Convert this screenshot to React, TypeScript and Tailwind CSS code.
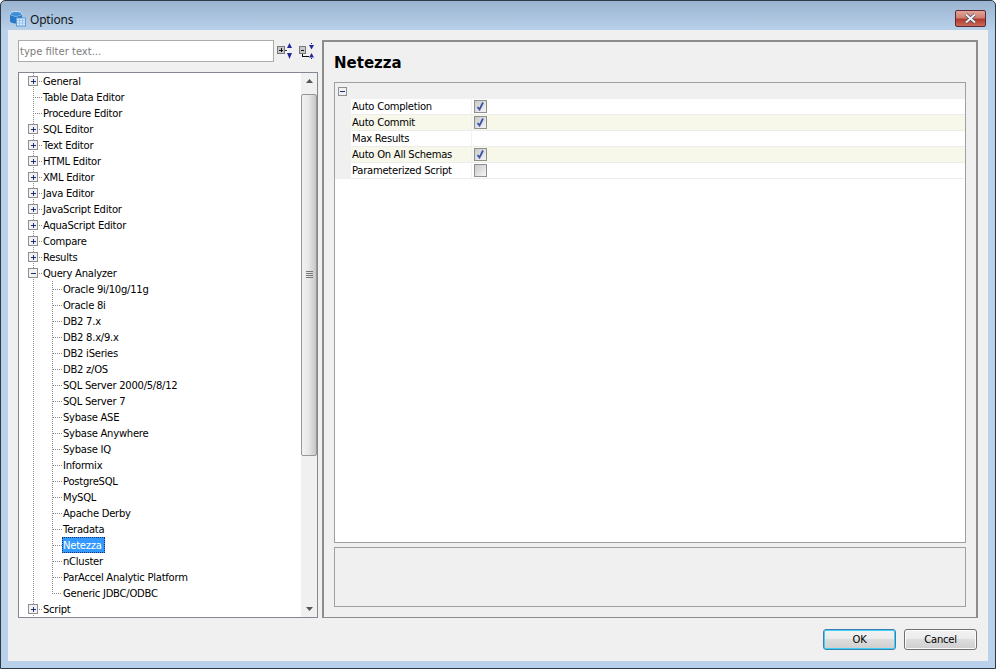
const treeItems = [
  { label: 'General', plus: true },
  { label: 'Table Data Editor' },
  { label: 'Procedure Editor' },
  { label: 'SQL Editor', plus: true },
  { label: 'Text Editor', plus: true },
  { label: 'HTML Editor', plus: true },
  { label: 'XML Editor', plus: true },
  { label: 'Java Editor', plus: true },
  { label: 'JavaScript Editor', plus: true },
  { label: 'AquaScript Editor', plus: true },
  { label: 'Compare', plus: true },
  { label: 'Results', plus: true },
  { label: 'Query Analyzer', minus: true },
  { label: 'Oracle 9i/10g/11g', child: true },
  { label: 'Oracle 8i', child: true },
  { label: 'DB2 7.x', child: true },
  { label: 'DB2 8.x/9.x', child: true },
  { label: 'DB2 iSeries', child: true },
  { label: 'DB2 z/OS', child: true },
  { label: 'SQL Server 2000/5/8/12', child: true },
  { label: 'SQL Server 7', child: true },
  { label: 'Sybase ASE', child: true },
  { label: 'Sybase Anywhere', child: true },
  { label: 'Sybase IQ', child: true },
  { label: 'Informix', child: true },
  { label: 'PostgreSQL', child: true },
  { label: 'MySQL', child: true },
  { label: 'Apache Derby', child: true },
  { label: 'Teradata', child: true },
  { label: 'Netezza', child: true, selected: true },
  { label: 'nCluster', child: true },
  { label: 'ParAccel Analytic Platform', child: true },
  { label: 'Generic JDBC/ODBC', child: true, last: true },
  { label: 'Script', plus: true },
];

const props = [
  { label: 'Auto Completion', checked: true },
  { label: 'Auto Commit', checked: true, alt: true },
  { label: 'Max Results' },
  { label: 'Auto On All Schemas', checked: true, alt: true },
  { label: 'Parameterized Script', checked: false },
];

function Expander({ minus }: { minus?: boolean }) {
  return (
    <>
      <rect x="9.5" y="3.5" width="9" height="9" fill="#f1f1f1" stroke="#8f8f8f" />
      <path d={minus ? 'M12 8h5' : 'M12 8h5M14 6v5'} stroke="#1f2f80" fill="none" />
    </>
  );
}

function TreeRow({ item }: { item: (typeof treeItems)[number] }) {
  return (
    <div className="flex h-4 items-start">
      <svg width={item.child ? 43 : 23} height="16" className="shrink-0" shapeRendering="crispEdges">
        <path d="M14.5 0v16" stroke="#8a8a8a" strokeDasharray="1 1" fill="none" />
        {item.child && (
          <path
            d={item.last ? 'M33.5 0v8.500h9' : 'M33.5 0v16M33.5 8.500h9'}
            stroke="#8a8a8a"
            strokeDasharray="1 1"
            fill="none"
          />
        )}
        {!item.child && <path d="M14 8.500h9" stroke="#8a8a8a" strokeDasharray="1 1" fill="none" />}
        {item.plus && <Expander />}
        {item.minus && <Expander minus />}
      </svg>
      <span
        className={
          item.selected
            ? 'h-4 bg-[#3399ff] pl-px pr-[3px] leading-[18px] text-white outline-1 -outline-offset-1 outline-dotted outline-[#10306a]'
            : 'pl-px leading-[18px]'
        }
      >
        {item.label}
      </span>
    </div>
  );
}

function Check({ checked }: { checked?: boolean }) {
  return (
    <div className="flex h-[13px] w-[13px] items-center justify-center border border-[#8e8f8f] bg-gradient-to-br from-[#c9c9c9] to-[#f6f6f6]">
      {checked && (
        <svg width="9" height="9" viewBox="0 0 9 9">
          <path d="M1.500 5l2 2.500L7 0.500" stroke="#3a55a5" strokeWidth="1.800" fill="none" />
        </svg>
      )}
    </div>
  );
}

function PushButton({ label, primary }: { label: string; primary?: boolean }) {
  return (
    <button
      className={
        primary
          ? 'h-[21px] w-[73px] rounded-[3px] border border-[#3c7fb1] bg-[linear-gradient(#f2f2f2_0%,#ebebeb_50%,#dddddd_50%,#cfcfcf_100%)] text-black shadow-[inset_0_0_0_1px_#40d0f5]'
          : 'h-[21px] w-[73px] rounded-[3px] border border-[#707070] bg-[linear-gradient(#f2f2f2_0%,#ebebeb_50%,#dddddd_50%,#cfcfcf_100%)] text-black shadow-[inset_0_0_0_1px_#fbfbfb]'
      }
    >
      {label}
    </button>
  );
}

export default function App() {
  return (
    <div className="h-[669px] w-[996px] overflow-hidden rounded-t-[5px] border border-[#2d3a46] bg-[linear-gradient(#9ab3d0_0px,#b9d1ea_30px)] font-['DejaVu_Sans',sans-serif] text-[10px] tracking-[-0.25px] text-black">
      {/* title bar */}
      <div className="flex h-[29px] items-center pt-[6px] pr-[9px] pl-[8px]">
        <svg width="18" height="18" viewBox="0 0 18 18" className="shrink-0">
          <ellipse cx="7" cy="4" rx="6" ry="2.500" fill="#3f8fd8" stroke="#e8f2fb" strokeWidth="0.700" />
          <path d="M1 4v7c0 1.500 3 2.500 6 2.500s6-1 6-2.500V4c0 1.500-3 2.500-6 2.500S1 5.500 1 4z" fill="#2a78c8" />
          <rect x="7.500" y="8" width="9" height="8" fill="#dcecfb" stroke="#5a9ad6" />
          <path d="M7.500 10.500h9M7.500 13h9M10.500 8v8M13.500 8v8" stroke="#7fb4e6" strokeWidth="0.700" />
        </svg>
        <span className="ml-[3px] pt-[2px] font-['Noto_Sans',sans-serif] text-[12px] tracking-[-0.2px] text-[#101820]">Options</span>
        <div className="ml-auto flex h-[17px] w-[31px] items-center justify-center rounded-[2px] border border-[#5a2a36] bg-[linear-gradient(#e3a49a_0%,#d08070_45%,#b13a2c_55%,#c96a58_100%)]">
          <svg width="13" height="11" viewBox="0 0 13 11">
            <path d="M2 1.500l9 8M11 1.500l-9 8" stroke="#4a4a5a" strokeWidth="3.400" fill="none" />
            <path d="M2 1.500l9 8M11 1.500l-9 8" stroke="#f0f0f4" strokeWidth="2" fill="none" />
          </svg>
        </div>
      </div>

      {/* dialog body */}
      <div className="ml-[7px] flex h-[631px] w-[980px] flex-col bg-[#f0f0f0] px-[10px] pt-[10px]">
        <div className="flex h-[578px] gap-[4px]">
          {/* left column */}
          <div className="flex w-[300px] flex-col gap-[10px]">
            <div className="flex h-[22px] items-center">
              <div className="flex h-[22px] w-[256px] items-center border border-[#ababab] bg-white px-[1px] tracking-normal text-[#7d7d7d]">
                type filter text...
              </div>
              <svg width="44" height="20" className="shrink-0" shapeRendering="crispEdges">
                <rect x="3.500" y="5.500" width="7" height="7" fill="#c8c8c8" stroke="#777" />
                <path d="M5 9h4M7 7v4" stroke="#111" />
                <path d="M11 9h2" stroke="#333" />
                <path d="M13 7l2.500-5 2.500 5zM13 12l2.500 6 2.500-6z" fill="#26279a" shapeRendering="auto" />
                <rect x="25.500" y="5.500" width="6" height="7" fill="#c8c8c8" stroke="#777" />
                <path d="M27 9h3" stroke="#111" />
                <path d="M28.500 13v2.500h6" stroke="#111" fill="none" />
                <path d="M35 4l2.500 4.500L40 4zM35 16.500l2.500-4.500 2.500 4.500z" fill="#26279a" shapeRendering="auto" />
                <path d="M37.500 2v1M37.500 17v1" stroke="#26279a" />
              </svg>
            </div>
            <div className="flex h-[546px] border border-[#828790] bg-white">
              <div className="w-[282px] overflow-hidden">
                {treeItems.map((item) => (
                  <TreeRow key={item.label} item={item} />
                ))}
              </div>
              {/* scrollbar */}
              <div className="flex w-[16px] flex-col bg-[#f0f0f0]">
                <div className="flex h-[21px] shrink-0 items-center justify-center pb-[6px]">
                  <svg width="7" height="4">
                    <path d="M0 4l3.500-4 3.500 4z" fill="#555" />
                  </svg>
                </div>
                <div className="flex h-[362px] shrink-0 items-center justify-center rounded-[2px] border border-[#979797] bg-[linear-gradient(90deg,#f2f2f2,#e8e8e8_45%,#c6c6c8)]">
                  <svg width="7" height="8" shapeRendering="crispEdges">
                    <path d="M0 0.500h7M0 2.500h7M0 4.500h7M0 6.500h7" stroke="#777" />
                  </svg>
                </div>
                <div className="flex flex-1 items-end justify-center pb-[6px]">
                  <svg width="7" height="4">
                    <path d="M0 0l3.500 4 3.500-4z" fill="#555" />
                  </svg>
                </div>
              </div>
            </div>
          </div>

          {/* right panel */}
          <div className="flex h-[578px] w-[656px] flex-col border-2 border-b border-[#8c8c8c] bg-[#f0f0f0] px-[10px]">
            <h1 className="flex h-[40px] shrink-0 items-center pt-[2px] text-[15px] leading-none font-bold tracking-normal text-black">Netezza</h1>
            <div className="h-[461px] shrink-0 border border-[#a0a0a0] bg-white">
              <div className="flex h-[16px] items-center bg-[#f0f0f0] pl-[3px]">
                <svg width="9" height="9" shapeRendering="crispEdges">
                  <rect x="0.500" y="0.500" width="8" height="8" fill="#f1f1f1" stroke="#8f8f8f" />
                  <path d="M2 4.500h5" stroke="#1f2f80" />
                </svg>
              </div>
              {props.map((p) => (
                <div key={p.label} className="flex h-[16px]">
                  <div className="w-[16px] shrink-0 bg-[#f0f0f0]" />
                  <div
                    className={
                      p.alt
                        ? 'flex flex-1 border-b border-[#ececec] bg-[#f7f7ea]'
                        : 'flex flex-1 border-b border-[#ececec] bg-white'
                    }
                  >
                    <div className="w-[121px] shrink-0 border-r border-[#f2f2f2] pl-px leading-[16px]">{p.label}</div>
                    <div className="flex items-center pl-[2px]">
                      {p.checked !== undefined && <Check checked={p.checked} />}
                    </div>
                  </div>
                </div>
              ))}
            </div>
            <div className="mt-[4px] h-[60px] shrink-0 border border-[#a0a0a0] bg-[#f0f0f0]" />
          </div>
        </div>

        {/* footer buttons */}
        <div className="flex justify-end gap-[8px] pt-[11px] pr-[1px]">
          <PushButton label="OK" primary />
          <PushButton label="Cancel" />
        </div>
      </div>
    </div>
  );
}
